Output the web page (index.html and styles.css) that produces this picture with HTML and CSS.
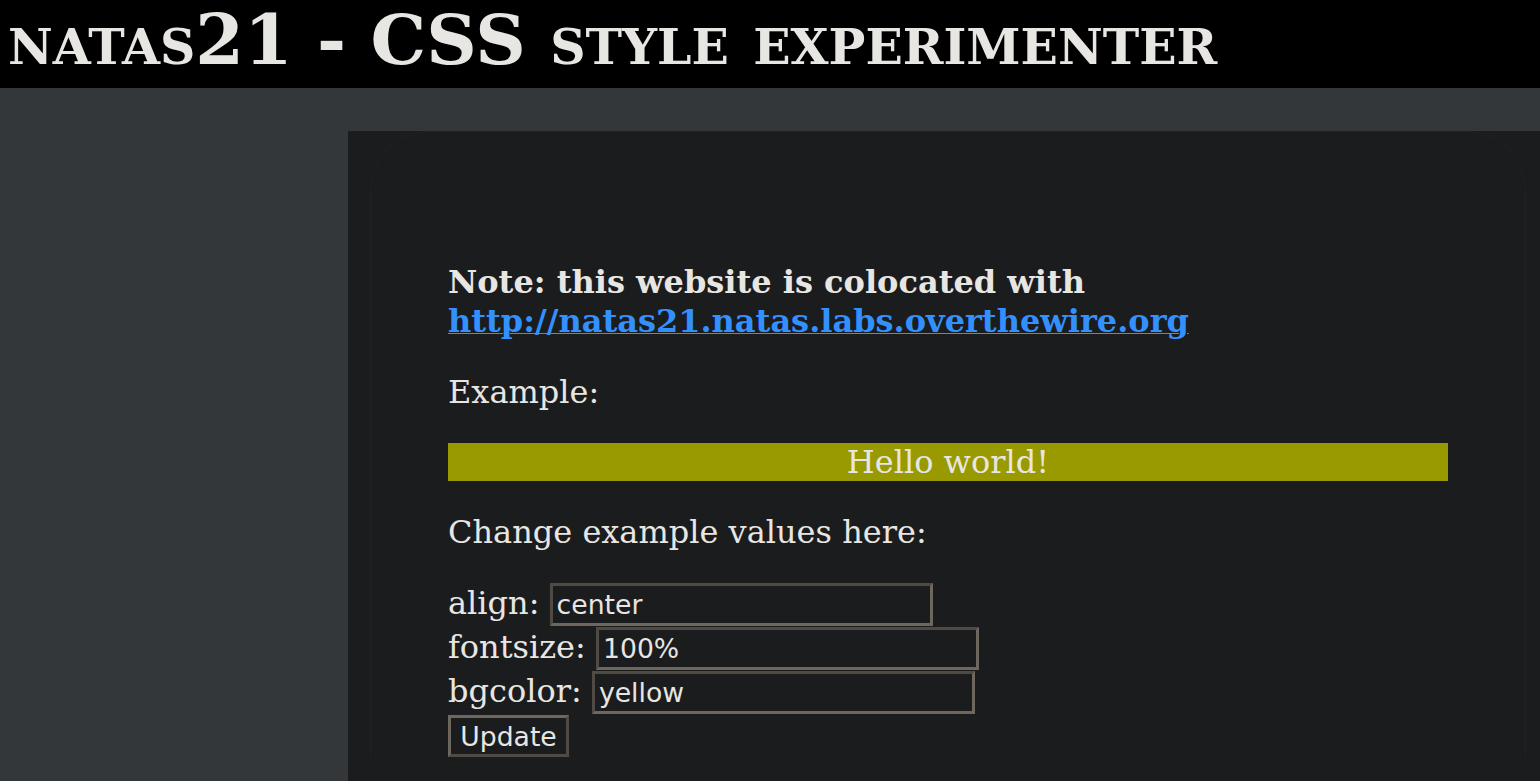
FILE: index.html
```html
<!DOCTYPE html>
<html lang="en">
<head>
    <meta charset="UTF-8">
    <title>natas21</title>
    <link rel="stylesheet" href="styles.css">
</head>
<body>
    <!-- header -->
    <div id="header">
        <h1>natas21 - CSS style experimenter</h1>
    </div>

    <!-- content -->
    <div id="content">
        <div class="frame">
            <p class="note">
                <b>Note: this website is colocated with <a href="javascript:;">http://natas21.natas.labs.overthewire.org</a></b>
            </p>

            <p>Example:</p>
            <div class="example">Hello world!</div>

            <p>Change example values here:</p>
            <form class="form">
                <div class="row">align: <input type="text" name="align" value="center" class="field"></div>
                <div class="row">fontsize: <input type="text" name="fontsize" value="100%" class="field"></div>
                <div class="row">bgcolor: <input type="text" name="bgcolor" value="yellow" class="field"></div>
                <div class="row"><input type="submit" value="Update" class="btn"></div>
            </form>
        </div>
    </div>
</body>
</html>
```

FILE: styles.css
```css
*{
    margin: 0;
    padding: 0;
}

html, body{
    height: 100%;
}

body{
    background-color: #343739;
    color: #e8e6e3;
    font-family: "DejaVu Serif", serif;
    font-size: 32px;
    overflow: hidden;
}

/* header */
#header{
    background-color: #000;
    height: 88px;
    padding-left: 8px;
}

#header h1{
    font-variant: small-caps;
    font-size: 70px;
    font-weight: bold;
    line-height: 80px;
    color: #e8e6e3;
    white-space: nowrap;
}

/* content */
#content{
    margin: 43px 0 0 348px;
    background-color: #1b1c1e;
    width: 1200px;
    height: 650px;
}

.frame{
    margin: 24px 22px 0;
    border: 1px solid #1f2123;
    border-bottom: 0;
    border-radius: 60px 60px 0 0;
    padding: 131px 77px 0;
    height: 494px;
}

.frame p{
    margin-bottom: 32px;
}

.note{
    line-height: 39px;
}

.note a{
    color: #3391ff;
    text-decoration-thickness: 1px;
}

.example{
    background-color: #999900;
    text-align: center;
    width: 1000px;
    height: 38px;
    line-height: 38px;
    margin-bottom: 32px;
}

.row{
    height: 44px;
    white-space: nowrap;
}

.field, .btn{
    box-sizing: border-box;
    font-family: "DejaVu Sans", sans-serif;
    font-size: 26.67px;
    color: #e8e6e3;
    background-color: #1b1c1e;
    border: 3px solid;
    border-color: #4f4a43 #6e675d #6e675d #4f4a43;
    height: 43px;
    padding: 0 4px;
}

.field{
    width: 383px;
}

.btn{
    width: 121px;
    height: 42px;
    border-color: #6e675d #4f4a43 #4f4a43 #6e675d;
}
```
